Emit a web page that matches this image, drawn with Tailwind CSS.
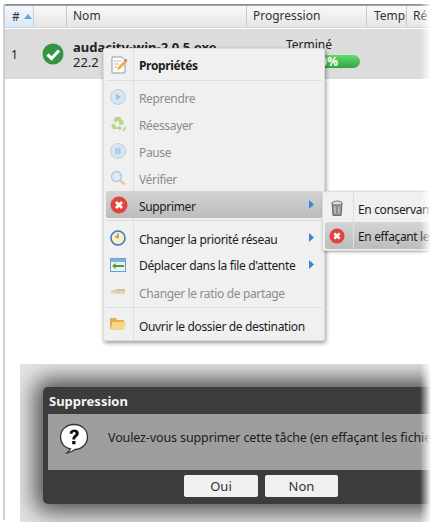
<!DOCTYPE html>
<html lang="fr">
<head>
  <meta charset="UTF-8">
  <title>Suppression</title>
  <script src="https://cdn.jsdelivr.net/npm/@tailwindcss/browser@4"></script>
</head>
<body class="bg-white overflow-hidden w-[431px] h-[527px] relative font-['Noto_Sans',sans-serif] text-[12px] text-[#222]">

  <!-- window frame -->
  <div class="pt-1 pl-[3px]">
    <div class="border-l-2 border-[#d0d0d0] h-[516px]">
      <div class="h-[2px] bg-gradient-to-b from-[#8a8a8a] to-[#a8a8a8]"></div>

      <!-- table header -->
      <div class="grid grid-cols-[29px_33px_180px_120px_40px_1fr] h-[22px] bg-gradient-to-b from-[#fafafa] to-[#e4e4e4] border-b border-[#d6d6d6] leading-[20px] text-[#333]">
        <div class="flex items-center gap-[4px] pl-[7px] bg-gradient-to-b from-[#f2f8fe] to-[#d8e8f8] border-r border-[#bcd4ec]">
          <span>#</span>
          <svg class="w-[8px] h-[5px]" viewBox="0 0 8 5"><path d="M4 0l4 5H0z" fill="#6f9fd8"/></svg>
        </div>
        <div class="border-r border-[#c8c8c8]"></div>
        <div class="pl-[6px] border-r border-[#c8c8c8]">Nom</div>
        <div class="pl-[6px] border-r border-[#c8c8c8]">Progression</div>
        <div class="pl-[7px] border-r border-[#c8c8c8] overflow-hidden whitespace-nowrap">Temps</div>
        <div class="pl-[6px] whitespace-nowrap">Ré</div>
      </div>

      <!-- download row -->
      <div class="flex h-[50px] mt-px bg-[#dcdcdc]">
        <div class="w-[37px] pl-[6px] leading-[52px] text-[12px]">1</div>
        <div class="w-[26px] flex items-center">
          <svg class="w-[22px] h-[22px]" viewBox="0 0 22 22"><circle cx="11" cy="11" r="10.5" fill="#35943f"/><path d="M5.5 11.5l4 4 7.5-8" fill="none" stroke="#fff" stroke-width="3.2"/></svg>
        </div>
        <div class="w-[180px] pl-[5px] pt-[11px] leading-[15px] text-[13px] whitespace-nowrap">
          <div class="font-bold">audacity-win-2.0.5.exe</div>
          <div>22.2 Mo</div>
        </div>
        <div class="pl-[38px] pt-[8px] leading-[15px]">
          <div>Terminé</div>
          <div class="mt-[3px] ml-[-30px] w-[104px] h-[13px] rounded-full bg-gradient-to-b from-[#5fdc68] to-[#2fa548] text-right pr-[22px] leading-[13px] text-white font-bold">100%</div>
        </div>
      </div>

      <!-- confirm dialog with its shade -->
      <div class="mt-[285px] ml-[15px] h-[158px] bg-[#e4e4e4] overflow-hidden pt-[23px] pl-[23px]">
        <div class="w-[420px] h-[117px] bg-[#3c3c3c] rounded-[5px] shadow-[0_0_22px_8px_rgba(30,30,30,0.75)] pl-[5px] flex flex-col">
          <div class="h-[27px] pl-[1px] pt-[1px] leading-[26px] text-[13px] font-bold text-[#f4f4f4]">Suppression</div>
          <div class="h-[56px] bg-[#9e9e9e] flex items-center pl-[11px] gap-[19px] whitespace-nowrap overflow-hidden text-[12.5px] tracking-[-0.12px] text-[#1c1c1c]">
            <svg class="w-[30px] h-[32px] shrink-0 -mt-[6px]" viewBox="0 0 30 32">
              <path d="M15 1.5C7 1.5 1.5 7 1.5 14c0 6.500 4.500 11 10 12-1 1.500-2.500 3-3.500 4 3-.5 6-2 8-3.500 7.500-.5 12.500-6 12.500-12.500C28.500 7 23 1.500 15 1.500z" fill="#fff" stroke="#333" stroke-width="1.300"/>
              <path d="M10.500 10.500c.5-3 2.500-4 4.700-4 2.800 0 4.600 1.600 4.600 3.800 0 3.300-3.500 3.400-3.500 6.200h-3c0-4 3.300-4.400 3.300-6 0-1-.7-1.500-1.500-1.500-1 0-1.600.7-1.800 2zM13.200 18h3.300v3.200h-3.300z" fill="#111"/>
            </svg>
            <span class="pb-[8px]">Voulez-vous supprimer cette tâche (en effaçant les fichiers) ?</span>
          </div>
          <div class="flex gap-[7px] pl-[136px] pt-[5px]">
            <div class="w-[74px] h-[22px] bg-[#f0f0f0] rounded-[2px] text-center leading-[22px] text-[13px] text-[#333]">Oui</div>
            <div class="w-[73px] h-[22px] bg-[#f0f0f0] rounded-[2px] text-center leading-[22px] text-[13px] text-[#333]">Non</div>
          </div>
        </div>
      </div>
    </div>
  </div>

  <!-- context menu -->
  <div class="absolute left-[103px] top-[48px] w-[222px] h-[293px] bg-[#f0f0f0] border border-[#dcdcdc] rounded-[2px] shadow-[1px_2px_4px_rgba(0,0,0,0.4)] flex flex-col pl-[2px] pr-[2px] text-[#1c1c1c] tracking-[-0.35px]">
    <div class="absolute left-[29px] top-0 bottom-0 w-px bg-[#dedede]"></div>

    <div class="h-[31px] flex items-center relative">
      <svg class="w-[18px] h-[18px] ml-[4px]" viewBox="0 0 18 18"><path d="M2 1h10l3 3v13H2z" fill="#fdfdfd" stroke="#999"/><path d="M4 5h7M4 8h5M4 11h3" stroke="#bbb"/><path d="M7 14l1-3 7-7 2 2-7 7z" fill="#f0b030"/><path d="M14 4l1.500-1.500 2 2L16 6z" fill="#d070c0"/></svg>
      <span class="ml-[11px] pt-[3px] font-bold">Propriétés</span>
    </div>
    <div class="h-px bg-[#dedede] relative"></div>

    <div class="h-[27px] mt-[2px] flex items-center text-[#8c8c8c]">
      <svg class="w-[16px] h-[16px] ml-[4px]" viewBox="0 0 16 16"><circle cx="8" cy="8" r="7.500" fill="#d8e6f4" stroke="#b8cfe6"/><path d="M6 4.500L11 8l-5 3.500z" fill="#a4c2e2"/></svg>
      <span class="ml-[13px] pt-[4px]">Reprendre</span>
    </div>
    <div class="h-[27px] flex items-center text-[#8c8c8c]">
      <svg class="w-[16px] h-[16px] ml-[4px]" viewBox="0 0 16 16"><path d="M5 1h5l2.500 4 1.500-1-1 5-5-1 1.500-1L8 4 6.500 6.500 3.500 5zM1 9l3-1.500L6 11h3V9l3 3-3 3v-2H3zM15 10l1 2-2 3h-2l2-3z" fill="#b4d68c"/></svg>
      <span class="ml-[13px] pt-[4px]">Réessayer</span>
    </div>
    <div class="h-[27px] flex items-center text-[#8c8c8c]">
      <svg class="w-[16px] h-[16px] ml-[4px]" viewBox="0 0 16 16"><circle cx="8" cy="8" r="7.500" fill="#d8e6f4" stroke="#b8cfe6"/><path d="M5.500 5h2v6h-2zM8.500 5h2v6h-2z" fill="#a4c2e2"/></svg>
      <span class="ml-[13px] pt-[4px]">Pause</span>
    </div>
    <div class="h-[27px] flex items-center text-[#8c8c8c]">
      <svg class="w-[16px] h-[16px] ml-[4px]" viewBox="0 0 16 16"><circle cx="6.500" cy="6.500" r="5" fill="#dfeaf6" stroke="#b5c8dc" stroke-width="1.500"/><path d="M10.500 10.500l4 4" stroke="#e0c898" stroke-width="2.500"/></svg>
      <span class="ml-[13px] pt-[4px]">Vérifier</span>
    </div>

    <div class="h-[27px] flex items-center bg-gradient-to-b from-[#d4d4d4] to-[#bcbcbc] rounded-[2px] relative">
      <svg class="w-[18px] h-[18px] ml-[4px]" viewBox="0 0 18 18"><circle cx="9" cy="9" r="8.500" fill="#e0443c"/><path d="M6 6l6 6M12 6l-6 6" stroke="#fff" stroke-width="2.800"/></svg>
      <span class="ml-[11px] pt-[4px]">Supprimer</span>
      <svg class="w-[5px] h-[9px] ml-auto mr-[8px]" viewBox="0 0 5 9"><path d="M0 0l5 4.500L0 9z" fill="#3b84d8"/></svg>
    </div>
    <div class="h-px mt-[2px] bg-[#dedede]"></div>

    <div class="h-[27px] mt-[3px] flex items-center">
      <svg class="w-[16px] h-[16px] ml-[4px]" viewBox="0 0 16 16"><circle cx="8" cy="8" r="7" fill="#f8efc8" stroke="#3b78c0" stroke-width="1.600"/><path d="M8 3.500V8l-3-2" fill="none" stroke="#806030"/></svg>
      <span class="ml-[13px] pt-[4px]">Changer la priorité réseau</span>
      <svg class="w-[5px] h-[9px] ml-auto mr-[8px]" viewBox="0 0 5 9"><path d="M0 0l5 4.500L0 9z" fill="#3b84d8"/></svg>
    </div>
    <div class="h-[27px] flex items-center">
      <svg class="w-[16px] h-[14px] ml-[4px]" viewBox="0 0 16 14"><rect x=".5" y=".5" width="15" height="13" fill="#e6f2fb" stroke="#6ea0c8"/><path d="M1 1h14v3H1z" fill="#7cb4dc"/><path d="M3 8h11" stroke="#5a9a28" stroke-width="2"/><path d="M5.500 5v6L2 8z" fill="#5a9a28"/></svg>
      <span class="ml-[13px] pt-[3px]">Déplacer dans la file d'attente</span>
      <svg class="w-[5px] h-[9px] ml-auto mr-[8px]" viewBox="0 0 5 9"><path d="M0 0l5 4.500L0 9z" fill="#3b84d8"/></svg>
    </div>
    <div class="h-[27px] flex items-center text-[#8c8c8c]">
      <svg class="w-[16px] h-[8px] ml-[4px]" viewBox="0 0 16 8"><path d="M0 3l6-2h9v5H6L1 5z" fill="#e2d4b2"/><path d="M7 1h8v2H7z" fill="#c8c0a8"/></svg>
      <span class="ml-[13px] pt-[4px]">Changer le ratio de partage</span>
    </div>
    <div class="h-px mt-[2px] bg-[#dedede]"></div>

    <div class="h-[31px] flex items-center">
      <svg class="w-[16px] h-[13px] ml-[4px]" viewBox="0 0 16 13"><path d="M0 1h6l1 2h7v2H3L1 12H0z" fill="#e0b050"/><path d="M3 5h13l-2 8H1z" fill="#f6d788"/></svg>
      <span class="ml-[13px] pt-[6px]">Ouvrir le dossier de destination</span>
    </div>
  </div>

  <!-- submenu -->
  <div class="absolute left-[322px] top-[191px] w-[120px] h-[60px] bg-[#f0f0f0] border border-[#dcdcdc] rounded-[2px] shadow-[1px_1px_3px_rgba(0,0,0,0.35)] pt-[3px] pl-[2px] whitespace-nowrap text-[#1c1c1c] tracking-[-0.35px] overflow-hidden">
    <div class="h-[27px] flex items-center">
      <svg class="w-[12px] h-[17px] ml-[6px] shrink-0" viewBox="0 0 12 16"><path d="M1 2h10l-1 13H2z" fill="#8e8e8e" stroke="#6a6a6a"/><ellipse cx="6" cy="2.500" rx="5" ry="2" fill="#dcdcdc" stroke="#7a7a7a"/><path d="M4 6v7M8 6v7" stroke="#dcdcdc"/></svg>
      <span class="ml-[15px] pt-[3px] shrink-0">En conservant les fichiers</span>
    </div>
    <div class="h-[27px] flex items-center bg-gradient-to-b from-[#d4d4d4] to-[#bcbcbc] rounded-[2px]">
      <svg class="w-[16px] h-[16px] ml-[4px] shrink-0" viewBox="0 0 18 18"><circle cx="9" cy="9" r="8.500" fill="#e0443c"/><path d="M6 6l6 6M12 6l-6 6" stroke="#fff" stroke-width="2.800"/></svg>
      <span class="ml-[13px] pt-[3px] shrink-0">En effaçant les fichiers</span>
    </div>
    <div class="absolute left-[30px] top-0 bottom-0 w-px bg-[#dedede]"></div>
  </div>

  <!-- fade of the cropped edge -->
  <div class="absolute right-0 top-0 bottom-0 w-[11px] bg-gradient-to-r from-white/0 to-white"></div>
</body>
</html>
